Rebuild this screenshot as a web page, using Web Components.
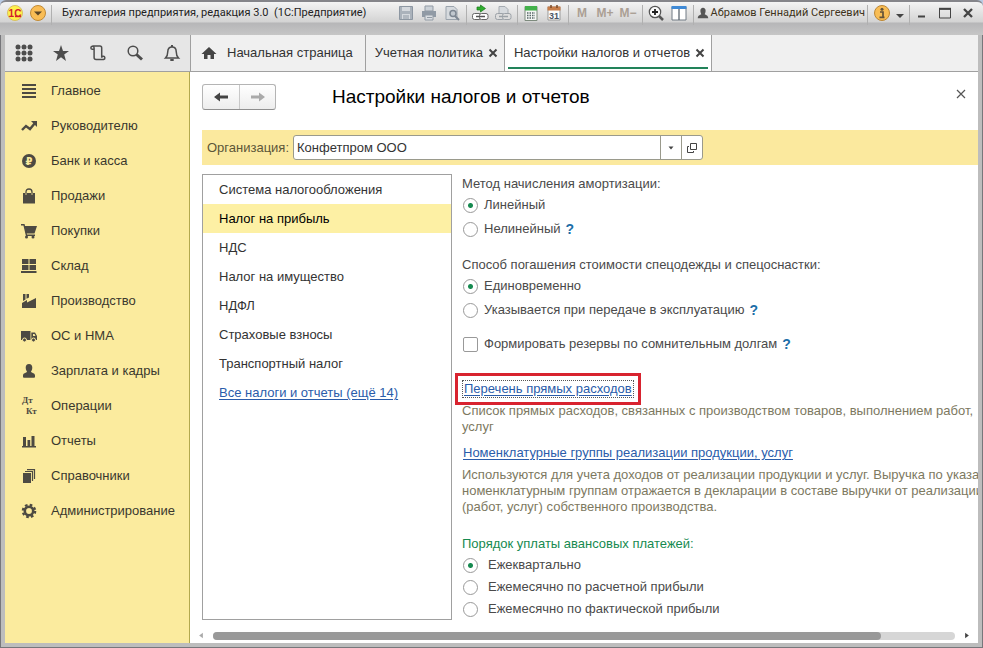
<!DOCTYPE html>
<html lang="ru">
<head>
<meta charset="utf-8">
<title>Бухгалтерия предприятия</title>
<style>
  body {
    margin: 0;
    background: #b9cbe4;
    font: 13px/16px "Liberation Sans", Arial, sans-serif;
    color: #4a4a4a;
  }
</style>
</head>
<body>
<app-window></app-window>

<script>
const ICONS = {
  // title bar
  logo: `<circle cx="8" cy="8" r="7.5" fill="#fff04a" stroke="#d8c060"/><text x="8" y="12" text-anchor="middle" font-family="Liberation Sans" font-weight="bold" font-size="10" fill="#d3202a">1С</text><path d="M8 11.5h6" stroke="#d3202a" stroke-width="1.4"/>`,
  mainmenu: `<circle cx="8" cy="8" r="7.5" fill="#f9bd55" stroke="#c18a35"/><path d="M4 6.500h8L8 10.500z" fill="#5a4526"/>`,
  save: `<path d="M1.500 1.500h13v13h-13z" fill="#aab2bb" stroke="#8d97a2"/><path d="M4 2h8v4H4z" fill="#d5d9de"/><path d="M4 9h8v5H4z" fill="#d5d9de"/><path d="M5 11h6M5 13h6" stroke="#8d97a2"/>`,
  print: `<path d="M4 1h8v5H4z" fill="#ccd2d8" stroke="#929ba5"/><path d="M1 6h14v6H1z" fill="#909aa5"/><path d="M4 10h8v5H4z" fill="#d9dde1" stroke="#929ba5"/><path d="M6 12.500h5" stroke="#929ba5"/>`,
  preview: `<path d="M2 1.500h8l3 3v10H2z" fill="#d6dade" stroke="#9aa3ac"/><circle cx="9" cy="8.500" r="3" fill="#c1c8cf" stroke="#7d8792" stroke-width="1.5"/><path d="M11 11l4 4" stroke="#7d8792" stroke-width="2"/>`,
  getlink: `<path d="M8.500 0l5 3.500-5 3.500V5H5V2h3.500z" fill="#2fae2f" stroke="#187a18" stroke-width=".7"/><rect x=".5" y="8.500" width="8.500" height="6" rx="2" fill="#fff" stroke="#666"/><rect x="7.500" y="8.500" width="8.500" height="6" rx="2" fill="#fff" stroke="#666"/><path d="M4 11.500h9" stroke="#555" stroke-width="1.500"/>`,
  openlink: `<path d="M4 1.500h6l3 3V10H4z" fill="#d6dade" stroke="#a5abb1"/><rect x=".5" y="8.500" width="8.500" height="6" rx="2" fill="#ddd" stroke="#9ba1a7"/><rect x="7.500" y="8.500" width="8.500" height="6" rx="2" fill="#ddd" stroke="#9ba1a7"/><path d="M4 11.500h9" stroke="#9ba1a7" stroke-width="1.500"/>`,
  calc: `<path d="M2 1.500h12v14H2z" fill="#f4f6f4" stroke="#7d8a7d"/><path d="M2 1h12v4.500H2z" fill="#43b14b"/><path d="M4 8h8M4 10.500h8M4 13h8" stroke="#566" stroke-width="1.500" stroke-dasharray="1.500 1"/>`,
  calendar: `<path d="M2 2h12v13H2z" fill="#fdfdfd" stroke="#999"/><path d="M1.500 1.500h13v4h-13z" fill="#c87d48"/><path d="M5 0v3M11 0v3" stroke="#7b4a26" stroke-width="1.500"/><text x="8" y="13.500" text-anchor="middle" font-family="Liberation Sans" font-weight="bold" font-size="9" fill="#4c5564">31</text>`,
  zoom: `<circle cx="7" cy="7" r="5.700" fill="#fafafa" stroke="#555" stroke-width="1.200"/><path d="M4 7h6M7 4v6" stroke="#222" stroke-width="1.800"/><path d="M11 11l4 4" stroke="#555" stroke-width="2.500"/>`,
  panes: `<path d="M1 2h14v13H1z" fill="#fff" stroke="#707a84"/><path d="M.500 1h15v3H.500z" fill="#3f8ad6"/><path d="M8 4v11" stroke="#5b6670" stroke-width="1.300"/>`,
  user: `<path d="M8 2c2 0 3 1.500 3 3.500S10 9 10 9.500c1 1 4 1 4 4.500H2c0-3.500 3-3.500 4-4.500 0-.500-1-2-1-4S6 2 8 2z" fill="#555"/>`,
  info: `<circle cx="8" cy="8" r="7.500" fill="#f8bd55" stroke="#bd8733"/><circle cx="8" cy="4.200" r="1.500" fill="#615239"/><path d="M6 7h3v5M5.500 12.300h5" fill="none" stroke="#615239" stroke-width="1.700"/>`,
  caret: `<path d="M4 9h8l-4 4z" fill="#444"/>`,
  min: `<path d="M4 11.500h7" stroke="#444" stroke-width="2"/>`,
  max: `<path d="M2.500 4h11v9h-11z" fill="none" stroke="#444"/><path d="M2 3.800h12" stroke="#444" stroke-width="2"/>`,
  closewin: `<path d="M4 4l8 8M12 4l-8 8" stroke="#444" stroke-width="2.300"/>`,
  // toolbar
  apps: `<g fill="#4d4d4d"><circle cx="2" cy="2" r="2.500"/><circle cx="8" cy="2" r="2.500"/><circle cx="14" cy="2" r="2.500"/><circle cx="2" cy="8" r="2.500"/><circle cx="8" cy="8" r="2.500"/><circle cx="14" cy="8" r="2.500"/><circle cx="2" cy="14" r="2.500"/><circle cx="8" cy="14" r="2.500"/><circle cx="14" cy="14" r="2.500"/></g>`,
  star: `<path d="M8 0l2 6h6l-4.800 3.600L13 16l-5-3.800L3 16l1.800-6.400L0 6h6z" fill="#4d4d4d"/>`,
  history: `<path d="M4.500 4.300H2.200a1.600 1.600 0 1 1 1.900-1.600V12.500q0 2 2 2h7.500a1.600 1.600 0 1 0-1.900-1.800V3q0-1.900-1.800-1.900H2.500" fill="none" stroke="#4d4d4d" stroke-width="1.500"/>`,
  search: `<circle cx="6" cy="6" r="4.800" fill="none" stroke="#4d4d4d" stroke-width="1.500"/><path d="M9.500 9.500l5.500 5" stroke="#4d4d4d" stroke-width="3"/>`,
  bell: `<path d="M1.500 13h13c-2-2-2.300-4-2.300-6.500C12.200 3.500 10.500 2 8 2S3.800 3.500 3.800 6.500C3.800 9 3.500 11 1.500 13z" fill="none" stroke="#4d4d4d" stroke-width="1.500"/><path d="M8 0v2M6.300 15h3.400" stroke="#4d4d4d" stroke-width="2"/>`,
  home: `<path d="M8 2l7.500 7H13v5H9.500v-4h-3v4H3V9H.500z" fill="#444"/>`,
  close: `<path d="M4.500 4.500l7 7M11.500 4.500l-7 7" stroke="#444" stroke-width="2"/>`,
  closethin: `<path d="M4 4l8 8M12 4l-8 8" stroke="#555" stroke-width="1.200"/>`,
  back: `<path d="M1 8l6-4.500v3h8v3H7v3z" fill="#444"/>`,
  forward: `<path d="M15 8L9 3.500v3H1v3h8v3z" fill="#aaa"/>`,
  drop: `<path d="M5.500 6.500h5L8 9.500z" fill="#444"/>`,
  open: `<path d="M6.500 3.500h6v6h-6z" fill="none" stroke="#444"/><path d="M5 6.500H3.500v6h6V11" fill="none" stroke="#444"/>`,
  left: `<path d="M10 5v6L6 8z" fill="#aaa"/>`,
  right: `<path d="M6 5v6l4-3z" fill="#444"/>`,
  // sections
  main: `<path d="M1 2h14M1 6h14M1 10h14M1 14h14" stroke="#4d4a42" stroke-width="1.800"/>`,
  trend: `<path d="M1 12l4-4 4 3 5-6" fill="none" stroke="#4d4a42" stroke-width="2.400"/><path d="M10 3h6v6z" fill="#4d4a42"/>`,
  ruble: `<circle cx="8" cy="8" r="7" fill="#4d4a42"/><text x="8" y="12" text-anchor="middle" font-family="DejaVu Sans" font-weight="bold" font-size="10" fill="#fbeb9e">₽</text>`,
  bag: `<path d="M2 5h12v10.500H2z" fill="#4d4a42"/><path d="M5 7V4q0-3 3-3t3 3v3" fill="none" stroke="#4d4a42" stroke-width="1.300"/><path d="M5 5v2M11 5v2" stroke="#d8cb8c"/>`,
  cart: `<path d="M3.500 3H16l-2.500 7.500H5z" fill="#4d4a42"/><path d="M0 1.800h3l2.500 10.400H14" fill="none" stroke="#4d4a42" stroke-width="1.400"/><circle cx="5.500" cy="14" r="1.500" fill="#4d4a42"/><circle cx="12" cy="14" r="1.500" fill="#4d4a42"/>`,
  stock: `<path d="M1 1h6.500v5H1zM8.500 1H15v5H8.500zM1 7h6.500v5H1zM8.500 7H15v5H8.500zM0 13h15.500v2H0z" fill="#4d4a42"/>`,
  factory: `<path d="M1 15V10l5-3v2.500l9-4.500V15z" fill="#4d4a42"/><path d="M2 8V1h2.500v5.500zM5.500 5.800V1H8v3.500z" fill="#4d4a42"/>`,
  truck: `<path d="M0 3h9.500v9H0zM10.300 4.500H14L16 8v4h-5.700z" fill="#4d4a42"/><path d="M12 6h1.500l1 2H12z" fill="#fbeb9e"/><circle cx="3.500" cy="12" r="2" fill="#4d4a42" stroke="#fbeb9e"/><circle cx="12.500" cy="12" r="2" fill="#4d4a42" stroke="#fbeb9e"/>`,
  person: `<path d="M8 1c2.300 0 3.300 1.600 3.300 3.700C11.300 7 10 8 10 9c1 1 4 1 4 3.500V14q0 .8-1 .8H3q-1 0-1-.8v-1.500C2 10 5 10 6 9c0-1-1.300-2-1.300-4.300C4.700 2.600 5.700 1 8 1z" fill="#4d4a42"/>`,
  dtkt: `<g font-family="Liberation Serif" font-weight="bold" font-size="9" fill="#4d4a42"><text x="1" y="5">Дт</text><text x="5" y="16">Кт</text></g>`,
  chart: `<path d="M2 4h3v9H2zM6.500 7h2.700v6H6.500zM10.500 3h3v10h-3zM1 13h14v1.400H1z" fill="#4d4a42"/>`,
  books: `<path d="M2 5h8v10H2z" fill="#4d4a42"/><path d="M4 3.500h7.500V13M6 1.700h7.500V11" fill="none" stroke="#4d4a42" stroke-width="1.200"/>`,
  gear: `<circle cx="8" cy="8" r="6.200" fill="none" stroke="#4d4a42" stroke-width="2.200" stroke-dasharray="2.600 2.269"/><circle cx="8" cy="8" r="4.200" fill="none" stroke="#4d4a42" stroke-width="2.600"/>`,
};

function define(name, html, setup) {
  const template = document.createElement("template");
  template.innerHTML = html;
  window.customElements.define(name, class extends HTMLElement {
    constructor() {
      super();
      this.attachShadow({ mode: "open" }).appendChild(template.content.cloneNode(true));
    }
    connectedCallback() {
      if (setup) setup(this, this.shadowRoot);
    }
  });
}

define("ui-icon", `
  <style>
    :host { display: inline-flex; flex: none; width: 16px; height: 16px; }
    svg { display: block; width: 100%; height: 100%; overflow: visible; }
  </style>
`, (el, root) => {
  root.innerHTML += `<svg viewBox="0 0 16 16" aria-hidden="true">${ICONS[el.getAttribute("name")]}</svg>`;
});

// flat button holding one glyph or a short caption
define("tool-button", `
  <style>
    :host { display: flex; flex: none; width: 23px; }
    button {
      display: flex; align-items: center; justify-content: center;
      width: 100%; padding: 0; border: 0; background: none;
      font: inherit; color: inherit;
    }
  </style>
  <button type="button"><slot></slot></button>
`, (el, root) => {
  root.querySelector("button").setAttribute("aria-label", el.getAttribute("label") || "");
});

define("title-bar", `
  <style>
    :host {
      display: flex; align-items: flex-start; height: 35px; box-sizing: border-box;
      padding: 1px 4px 0 3px; border-top: 2px solid #85858a; border-radius: 6px 6px 0 0;
      background: linear-gradient(#f4f4f4, #d3d3d3 20px, #b6b6b8 21px, #c6c6c6);
      font: 11px/20px Roboto, Tahoma, sans-serif; color: #222;
    }
    :host > * { height: 20px; }
    .title { flex: 1; margin-left: 8px; white-space: pre; }
    i { flex: none; width: 1px; height: 16px; margin: 2px; background: #b0b0b0; }
    i.last { margin-right: 0; }
    .memory { font: bold 12px/20px "Liberation Sans", sans-serif; color: #ab9f94; }
    .user { display: flex; align-items: center; gap: 1px; color: #3f3420; white-space: nowrap; }
    .user ui-icon { width: 14px; height: 14px; }
    .narrow { width: 14px; }
  </style>
  <tool-button label="1С"><ui-icon name="logo"></ui-icon></tool-button>
  <tool-button label="Меню"><ui-icon name="mainmenu"></ui-icon></tool-button>
  <i></i>
  <span class="title">Бухгалтерия предприятия, редакция 3.0  (1С:Предприятие)</span>
  <tool-button label="Сохранить"><ui-icon name="save"></ui-icon></tool-button>
  <tool-button label="Печать"><ui-icon name="print"></ui-icon></tool-button>
  <tool-button label="Просмотр"><ui-icon name="preview"></ui-icon></tool-button>
  <i></i>
  <tool-button label="Получить ссылку"><ui-icon name="getlink"></ui-icon></tool-button>
  <tool-button label="Перейти по ссылке"><ui-icon name="openlink"></ui-icon></tool-button>
  <i></i>
  <tool-button label="Калькулятор"><ui-icon name="calc"></ui-icon></tool-button>
  <tool-button label="Календарь"><ui-icon name="calendar"></ui-icon></tool-button>
  <i></i>
  <tool-button label="M" class="memory">M</tool-button>
  <tool-button label="M+" class="memory">M+</tool-button>
  <tool-button label="M-" class="memory">M−</tool-button>
  <i></i>
  <tool-button label="Масштаб"><ui-icon name="zoom"></ui-icon></tool-button>
  <tool-button label="Панели"><ui-icon name="panes"></ui-icon></tool-button>
  <i></i>
  <span class="user"><ui-icon name="user"></ui-icon>Абрамов Геннадий Сергеевич</span>
  <i></i>
  <tool-button label="Справка"><ui-icon name="info"></ui-icon></tool-button>
  <tool-button label="Ещё" class="narrow"><ui-icon name="caret"></ui-icon></tool-button>
  <i class="last"></i>
  <tool-button label="Свернуть"><ui-icon name="min"></ui-icon></tool-button>
  <tool-button label="Развернуть"><ui-icon name="max"></ui-icon></tool-button>
  <tool-button label="Закрыть"><ui-icon name="closewin"></ui-icon></tool-button>
`);

define("page-tab", `
  <style>
    :host {
      display: flex; align-items: center; gap: 3px; box-sizing: border-box; padding: 0 4px 0 9px;
      border-right: 1px solid #a0a0a0; color: #333; white-space: nowrap;
    }
    :host([home]) { padding: 0 12px 0 10px; gap: 10px; }
    :host([active]) {
      background: linear-gradient(#22835a, #22835a) center bottom 2px / calc(100% - 6px) 2px no-repeat, #fff;
    }
    button { border: 0; padding: 0; background: none; font: inherit; color: inherit; }
    .close { display: flex; width: 14px; justify-content: center; }
    :host([home]) .close { display: none; }
  </style>
  <slot name="icon"></slot>
  <button type="button"><slot></slot></button>
  <button type="button" class="close" aria-label="Закрыть"><ui-icon name="close"></ui-icon></button>
`);

define("tab-bar", `
  <style>
    :host { display: flex; height: 36px; border-bottom: 1px solid #a0a0a0; background: #f0f0f0; }
    .tools { display: flex; width: 186px; box-sizing: border-box; border-right: 1px solid #a0a0a0; background: #e6e6e6; }
    .tools tool-button { width: 37px; }
  </style>
  <div class="tools">
    <tool-button label="Разделы"><ui-icon name="apps"></ui-icon></tool-button>
    <tool-button label="Избранное"><ui-icon name="star"></ui-icon></tool-button>
    <tool-button label="История"><ui-icon name="history"></ui-icon></tool-button>
    <tool-button label="Поиск"><ui-icon name="search"></ui-icon></tool-button>
    <tool-button label="Оповещения"><ui-icon name="bell"></ui-icon></tool-button>
  </div>
  <page-tab home><ui-icon slot="icon" name="home"></ui-icon>Начальная страница</page-tab>
  <page-tab>Учетная политика</page-tab>
  <page-tab active>Настройки налогов и отчетов</page-tab>
`);

define("section-link", `
  <style>
    :host { display: block; }
    a { display: flex; align-items: center; gap: 14px; height: 35px; padding-left: 16px; color: #3a382e; text-decoration: none; white-space: nowrap; }
  </style>
  <a href="#"><ui-icon></ui-icon><slot></slot></a>
`, (el, root) => {
  const icon = document.createElement("ui-icon");
  icon.setAttribute("name", el.getAttribute("icon"));
  root.querySelector("ui-icon").replaceWith(icon);
});

define("section-panel", `
  <style>
    :host { display: block; flex: none; width: 184px; padding-top: 1px; border-right: 1px solid #b3a94f; background: #fbeb9e; }
  </style>
  <nav>
    <section-link icon="main">Главное</section-link>
    <section-link icon="trend">Руководителю</section-link>
    <section-link icon="ruble">Банк и касса</section-link>
    <section-link icon="bag">Продажи</section-link>
    <section-link icon="cart">Покупки</section-link>
    <section-link icon="stock">Склад</section-link>
    <section-link icon="factory">Производство</section-link>
    <section-link icon="truck">ОС и НМА</section-link>
    <section-link icon="person">Зарплата и кадры</section-link>
    <section-link icon="dtkt">Операции</section-link>
    <section-link icon="chart">Отчеты</section-link>
    <section-link icon="books">Справочники</section-link>
    <section-link icon="gear">Администрирование</section-link>
  </nav>
`);

define("form-header", `
  <style>
    :host { display: flex; align-items: center; height: 26px; padding: 12px 6px 20px 0; }
    .history { display: flex; height: 24px; border: 1px solid #b4b4b4; border-bottom-color: #8f8f8f; border-radius: 3px; background: linear-gradient(#fff, #ededed); }
    .history tool-button { width: 36px; }
    .history tool-button + tool-button { width: 35px; border-left: 1px solid #c8c8c8; }
    h1 { flex: 1; margin: 0 0 0 56px; font-size: 19px; line-height: 24px; font-weight: normal; color: #000; white-space: nowrap; }
    .close { align-self: flex-start; height: 20px; }
  </style>
  <div class="history">
    <tool-button label="Назад"><ui-icon name="back"></ui-icon></tool-button>
    <tool-button label="Вперед"><ui-icon name="forward"></ui-icon></tool-button>
  </div>
  <h1>Настройки налогов и отчетов</h1>
  <tool-button class="close" label="Закрыть"><ui-icon name="closethin"></ui-icon></tool-button>
`);

define("org-field", `
  <style>
    :host { display: flex; align-items: center; height: 35px; padding-left: 5px; background: #fbe99e; color: #5c5638; }
    label { width: 86px; }
    .box { display: flex; flex: 0 1 408px; height: 23px; border: 1px solid #9a9a8c; border-radius: 3px; background: #fff; overflow: hidden; }
    input { flex: 1; min-width: 0; border: 0; padding: 0 3px; background: none; font: inherit; color: #333; outline: 0; }
    tool-button { width: 20px; border-left: 1px solid #9a9a8c; }
  </style>
  <label for="org">Организация:</label>
  <div class="box">
    <input id="org" type="text" value="Конфетпром ООО">
    <tool-button label="Выбрать"><ui-icon name="drop"></ui-icon></tool-button>
    <tool-button label="Открыть"><ui-icon name="open"></ui-icon></tool-button>
  </div>
`);

define("tax-list", `
  <style>
    :host { display: block; flex: none; width: 248px; border: 1px solid #a0a0a0; background: #fff; }
    ul { margin: 0; padding: 0; list-style: none; }
    a { display: block; padding-left: 16px; line-height: 29px; color: #333; text-decoration: none; }
    a[aria-current] { background: #fdf0a4; color: #000; }
    a.all { color: #2a5caa; text-decoration: underline; text-underline-offset: 2px; }
  </style>
  <ul>
    <li><a href="#">Система налогообложения</a></li>
    <li><a href="#" aria-current="true">Налог на прибыль</a></li>
    <li><a href="#">НДС</a></li>
    <li><a href="#">Налог на имущество</a></li>
    <li><a href="#">НДФЛ</a></li>
    <li><a href="#">Страховые взносы</a></li>
    <li><a href="#">Транспортный налог</a></li>
    <li><a href="#" class="all">Все налоги и отчеты (ещё 14)</a></li>
  </ul>
`);

const CHOICE_CSS = `
  .row { display: flex; align-items: center; height: 22px; }
  label { display: flex; align-items: center; gap: 6px; white-space: nowrap; }
  input { appearance: none; flex: none; width: 15px; height: 15px; margin: 0 0 0 1px; border: 1px solid #999; background: #fff; }
  input[type=radio] { border-radius: 50%; }
  input[type=radio]:checked { background: radial-gradient(circle, #168a50 2px, #fff 3px); }
  input[type=checkbox] { border-radius: 2px; }
  .help { margin-left: 5px; color: #1c6ea8; font-size: 14px; font-weight: bold; text-decoration: none; }
`;

// options are separated by "|", "help" is the index of the one with a hint
define("radio-group", `
  <style>
    :host { display: block; }
    fieldset { display: grid; gap: 2px; margin: 0; padding: 0; border: 0; min-width: 0; }
    legend { padding: 0; line-height: 20px; }
    ${CHOICE_CSS}
    :host([accent]) legend { color: #168a50; }
    :host([accent]) fieldset { gap: 0; }
    :host([accent]) label { gap: 10px; }
  </style>
  <fieldset><legend></legend></fieldset>
`, (el, root) => {
  const fieldset = root.querySelector("fieldset");
  root.querySelector("legend").textContent = el.getAttribute("legend");
  el.getAttribute("options").split("|").forEach((text, i) => {
    const help = el.getAttribute("help") === String(i) ? `<a class="help" href="#">?</a>` : "";
    fieldset.insertAdjacentHTML("beforeend", `
      <div class="row"><label><input type="radio" name="choice" ${i === 0 ? "checked" : ""}>${text}</label>${help}</div>
    `);
  });
});

define("check-option", `
  <style>
    :host { display: block; }
    ${CHOICE_CSS}
  </style>
  <div class="row">
    <label><input type="checkbox"><slot></slot></label>
    <a class="help" href="#">?</a>
  </div>
`);

define("link-note", `
  <style>
    :host { display: flex; flex-direction: column; align-items: flex-start; gap: 6px; white-space: nowrap; }
    a { color: #2a5caa; padding: 0 1px; text-underline-offset: 2px; }
    p { margin: 0; color: #7d795f; }
    :host([focused]) { gap: 5px; }
    :host([focused]) a { border: 1px dotted #555; outline: 3px solid #d8232f; outline-offset: 4px; }
  </style>
  <a href="#"><slot name="link"></slot></a>
  <p><slot></slot></p>
`);

define("profit-settings", `
  <style>
    :host { display: flex; flex-direction: column; flex: 1; min-width: 0; overflow: hidden; padding-left: 10px; }
    .stock { margin-top: 15px; }
    check-option { margin-top: 12px; }
    .direct { margin-top: 25px; }
    .groups { margin-top: 10px; }
    .advance { margin-top: 19px; }
  </style>
  <radio-group legend="Метод начисления амортизации:" options="Линейный|Нелинейный" help="1"></radio-group>
  <radio-group class="stock" legend="Способ погашения стоимости спецодежды и спецоснастки:" options="Единовременно|Указывается при передаче в эксплуатацию" help="1"></radio-group>
  <check-option>Формировать резервы по сомнительным долгам</check-option>
  <link-note class="direct" focused>
    <span slot="link">Перечень прямых расходов</span>
    Список прямых расходов, связанных с производством товаров, выполнением работ,<br>услуг
  </link-note>
  <link-note class="groups">
    <span slot="link">Номенклатурные группы реализации продукции, услуг</span>
    Используются для учета доходов от реализации продукции и услуг. Выручка по указанным<br>номенклатурным группам отражается в декларации в составе выручки от реализации<br>(работ, услуг) собственного производства.
  </link-note>
  <radio-group class="advance" accent legend="Порядок уплаты авансовых платежей:" options="Ежеквартально|Ежемесячно по расчетной прибыли|Ежемесячно по фактической прибыли"></radio-group>
`);

define("scroll-strip", `
  <style>
    :host { display: flex; align-items: center; height: 15px; margin-left: -9px; padding-right: 3px; }
    tool-button { width: 16px; }
    ui-icon { height: 15px; }
    .track { flex: 1; height: 8px; margin: 0 4px; border-radius: 4px; background: #d6d6d6; }
    .thumb { width: 90%; height: 8px; border-radius: 4px; background: #999; }
  </style>
  <tool-button label="Влево"><ui-icon name="left"></ui-icon></tool-button>
  <div class="track"><div class="thumb"></div></div>
  <tool-button label="Вправо"><ui-icon name="right"></ui-icon></tool-button>
`);

define("app-window", `
  <style>
    :host { display: flex; flex-direction: column; min-height: 100vh; }
    .frame {
      display: flex; flex-direction: column; flex: 1; box-sizing: border-box;
      padding: 0 4px 4px; border: solid #77777b; border-width: 0 1px 1px; background: #bdbdbd;
    }
    .body { display: flex; flex: 1; background: #fff; }
    main { display: flex; flex-direction: column; flex: 1; min-width: 0; padding-left: 12px; }
    .form { display: flex; flex: 1; margin: 9px 0 8px; }
  </style>
  <title-bar></title-bar>
  <div class="frame">
    <tab-bar></tab-bar>
    <div class="body">
      <section-panel></section-panel>
      <main>
        <form-header></form-header>
        <org-field></org-field>
        <div class="form">
          <tax-list></tax-list>
          <profit-settings></profit-settings>
        </div>
        <scroll-strip></scroll-strip>
      </main>
    </div>
  </div>
`);
</script>
</body>
</html>
